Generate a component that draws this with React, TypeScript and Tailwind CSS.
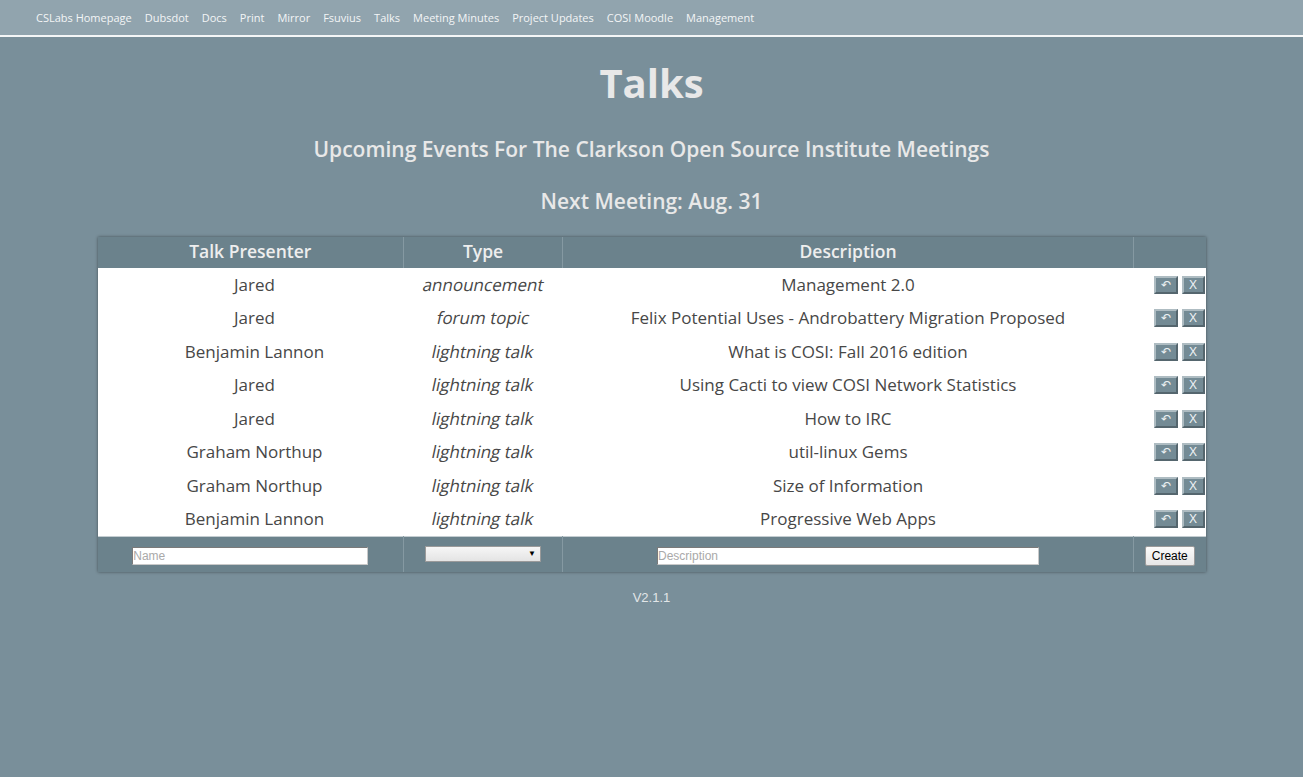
import React from "react";

const links = [
  "CSLabs Homepage",
  "Dubsdot",
  "Docs",
  "Print",
  "Mirror",
  "Fsuvius",
  "Talks",
  "Meeting Minutes",
  "Project Updates",
  "COSI Moodle",
  "Management",
];

const talks = [
  { name: "Jared", type: "announcement", desc: "Management 2.0" },
  { name: "Jared", type: "forum topic", desc: "Felix Potential Uses - Androbattery Migration Proposed" },
  { name: "Benjamin Lannon", type: "lightning talk", desc: "What is COSI: Fall 2016 edition" },
  { name: "Jared", type: "lightning talk", desc: "Using Cacti to view COSI Network Statistics" },
  { name: "Jared", type: "lightning talk", desc: "How to IRC" },
  { name: "Graham Northup", type: "lightning talk", desc: "util-linux Gems" },
  { name: "Graham Northup", type: "lightning talk", desc: "Size of Information" },
  { name: "Benjamin Lannon", type: "lightning talk", desc: "Progressive Web Apps" },
];

const btn =
  "h-[18px] bg-[#748b95] text-[#eef2f4] text-[12px] leading-none border-2 border-t-[#aebcc2] border-l-[#aebcc2] border-b-[#55666e] border-r-[#55666e] flex items-center justify-center";

export default function App() {
  return (
    <div className="min-h-[777px] bg-[#798f9a] font-['Open_Sans',sans-serif]">
      <nav className="h-[37px] bg-[#91a4ae] border-b-2 border-[#f4f6f7] flex items-center pl-[36px] pt-[2px] gap-[13px]">
        {links.map((l) => (
          <a key={l} className="text-[11px] text-[#f3f5f6] cursor-pointer">
            {l}
          </a>
        ))}
      </nav>

      <h1 className="text-center text-[40px] font-bold text-[#e8e8e8] mt-[20px] leading-[52px]">Talks</h1>
      <h2 className="text-center text-[21px] font-semibold text-[#e8e8e8] mt-[25px] leading-[30px]">
        Upcoming Events For The Clarkson Open Source Institute Meetings
      </h2>
      <h2 className="text-center text-[21px] font-semibold text-[#e8e8e8] mt-[22px] leading-[30px]">
        Next Meeting: Aug. 31
      </h2>

      <div className="flex justify-center mt-[21px]">
        <table className="w-[1108px] border-collapse table-fixed shadow-[0_0_3px_rgba(0,0,0,0.45)]">
          <colgroup>
            <col className="w-[306px]" />
            <col className="w-[159px]" />
            <col className="w-[571px]" />
            <col className="w-[72px]" />
          </colgroup>
          <thead>
            <tr className="h-[31px] bg-[#6b828c] text-[#eeeeee] text-[17.5px]">
              <th className="border-r border-[#8599a2] font-semibold pb-[2px]">Talk Presenter</th>
              <th className="border-r border-[#8599a2] font-semibold pb-[2px]">Type</th>
              <th className="border-r border-[#8599a2] font-semibold pb-[2px]">Description</th>
              <th></th>
            </tr>
          </thead>
          <tbody className="bg-white text-[#474747] text-[17px]">
            {talks.map((t, i) => (
              <tr key={i} className="h-[33.5px]">
                <td className="text-center pl-[8px] pb-[1px]">{t.name}</td>
                <td className="text-center pb-[1px]">
                  <span className="inline-block -skew-x-12">{t.type}</span>
                </td>
                <td className="text-center pb-[1px]">{t.desc}</td>
                <td>
                  <div className="flex justify-end gap-[4px] pr-[1px] font-['Liberation_Sans',sans-serif]">
                    <button className={btn + " w-[24px]"}>↶</button>
                    <button className={btn + " w-[23px]"}>X</button>
                  </div>
                </td>
              </tr>
            ))}
            <tr className="h-[36px] bg-[#6b828c] border-t border-[#c4cdd1] font-['Liberation_Sans',sans-serif]">
              <td className="border-r border-[#8599a2] text-center">
                <input
                  placeholder="Name"
                  className="w-[236px] h-[18px] bg-white text-[12px] px-0 border border-t-[#7a7a7a] border-l-[#7a7a7a] border-b-[#c9c9c9] border-r-[#c9c9c9] placeholder:text-[#a9a9a9]"
                />
              </td>
              <td className="border-r border-[#8599a2]">
                <div className="mx-auto w-[116px] h-[16px] bg-gradient-to-b from-[#f6f6f6] to-[#e4e4e4] border border-[#9a9a9a] flex items-center justify-end pr-[4px]">
                  <span className="text-[8px] text-black">▼</span>
                </div>
              </td>
              <td className="border-r border-[#8599a2] text-center">
                <input
                  placeholder="Description"
                  className="w-[382px] h-[18px] bg-white text-[12px] px-0 border border-t-[#7a7a7a] border-l-[#7a7a7a] border-b-[#c9c9c9] border-r-[#c9c9c9] placeholder:text-[#a9a9a9]"
                />
              </td>
              <td className="text-center">
                <button className="h-[20px] px-[6px] text-[12px] text-black bg-gradient-to-b from-[#fbfbfb] to-[#e6e6e6] border border-[#9a9a9a] rounded-[2px]">
                  Create
                </button>
              </td>
            </tr>
          </tbody>
        </table>
      </div>

      <p className="text-center text-[13px] text-[#e2e6e8] mt-[16px] font-['Liberation_Sans',sans-serif]">V2.1.1</p>
    </div>
  );
}
